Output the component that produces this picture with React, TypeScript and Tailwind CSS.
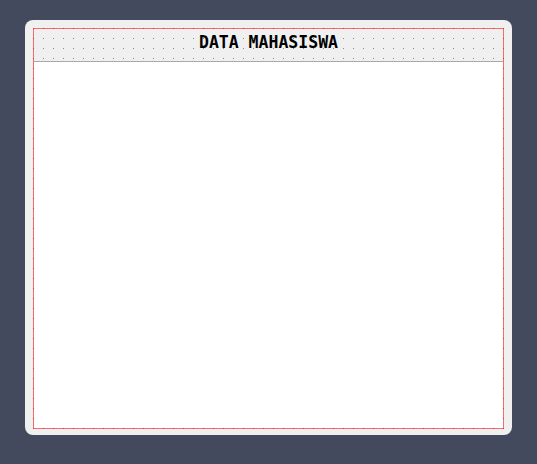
import React from "react";

export default function App() {
  return (
    <div className="min-h-[464px] w-full bg-[#434a5e] pt-[20px] flex justify-center items-start">
      <div className="w-[487px] rounded-[8px] bg-[#f0f0f0] pt-[8px] px-[8px] pb-[6px]">
        <div
          className="h-[401px] border border-[rgba(255,0,0,0.55)] bg-[#f0f0f0] bg-origin-border bg-[length:10px_10px] bg-[radial-gradient(circle_at_0.5px_0.5px,#8a8a8a_0.6px,transparent_0.9px)] flex flex-col"
        >
          <div className="h-[33px] shrink-0 border-b border-[#a9a9a9] flex items-center justify-center pb-[3px]">
            <span
              className="text-[16.5px] font-bold text-black leading-none inline-block scale-y-110"
              style={{ fontFamily: '"DejaVu Sans Mono", "Liberation Mono", monospace' }}
            >
              DATA MAHASISWA
            </span>
          </div>
          <div className="flex-1 bg-white" />
        </div>
      </div>
    </div>
  );
}
